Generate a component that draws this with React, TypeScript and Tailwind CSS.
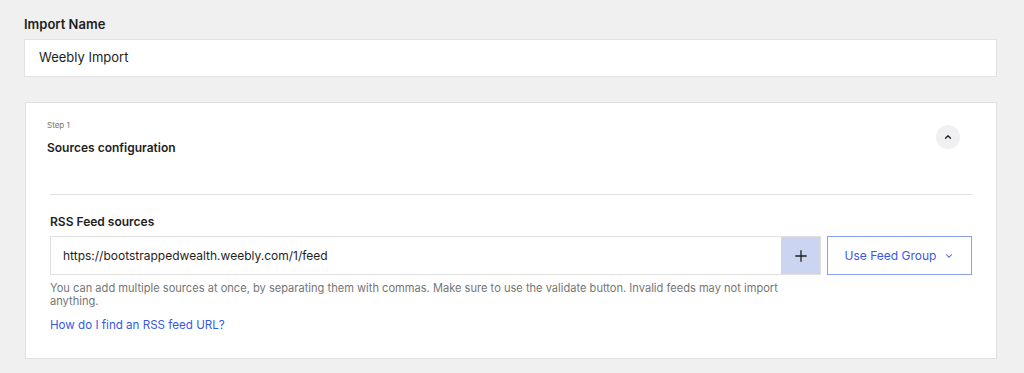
import React from 'react';

// Import form — name field + collapsible "Sources configuration" step

function ChevronUp() {
  return (
    <svg width="10" height="10" viewBox="0 0 24 24" fill="none" stroke="#1e1e1e" strokeWidth="3" strokeLinecap="round" strokeLinejoin="round">
      <path d="M6 15l6-6 6 6" />
    </svg>
  );
}

function ChevronDown() {
  return (
    <svg width="10" height="10" viewBox="0 0 24 24" fill="none" stroke="currentColor" strokeWidth="2.5" strokeLinecap="round" strokeLinejoin="round">
      <path d="M6 9l6 6 6-6" />
    </svg>
  );
}

function Plus() {
  return (
    <svg width="14" height="14" viewBox="0 0 24 24" fill="none" stroke="#1e1e1e" strokeWidth="2.2" strokeLinecap="round">
      <path d="M12 3v18M3 12h18" />
    </svg>
  );
}

export default function App() {
  return (
    <div
      className="min-h-[373px] w-[1024px] bg-[#f0f0f0] pl-[24px] pr-[27px] pt-[16px] text-[#1e1e1e]"
      style={{ fontFamily: 'Inter, "Liberation Sans", sans-serif' }}
    >
      <label className="block text-[13px] font-semibold leading-[16px]">Import Name</label>
      <div className="mt-[7px] flex h-[38px] items-center border border-[#e2e2e2] bg-white px-[14px] text-[13px]">
        Weebly Import
      </div>

      <section className="ml-px mt-[25px] border border-[#e0e0e0] bg-white pb-[26px]">
        <header className="flex items-start justify-between pl-[21px] pr-[36px] pt-[17px]">
          <div>
            <div className="text-[8px] leading-[10px] text-[#757575]">Step 1</div>
            <h2 className="mt-[10px] text-[12px] font-semibold leading-[16px]">Sources configuration</h2>
          </div>
          <button className="mt-[5px] flex h-[24px] w-[24px] items-center justify-center rounded-full bg-[#f0f0f3]">
            <ChevronUp />
          </button>
        </header>

        <div className="mx-[24px] mt-[38px] border-t border-[#e0e0e0]" />

        <div className="px-[24px] pt-[19px]">
          <label className="block text-[12px] font-semibold leading-[16px]">RSS Feed sources</label>
          <div className="mt-[6px] flex gap-[6px]">
            <div className="flex h-[39px] flex-1 border border-[#e0e0e0]">
              <div className="flex flex-1 items-center px-[12px] text-[12px]">
                https://bootstrappedwealth.weebly.com/1/feed
              </div>
              <button className="flex w-[39px] items-center justify-center bg-[#cbd5f1]">
                <Plus />
              </button>
            </div>
            <button className="flex h-[39px] w-[145px] items-center justify-center gap-[8px] border border-[#8a9eec] text-[12px] text-[#3858e9]">
              Use Feed Group
              <ChevronDown />
            </button>
          </div>
          <p className="mt-[7px] max-w-[740px] text-[11.1px] leading-[13px] text-[#757575]">
            You can add multiple sources at once, by separating them with commas. Make sure to use the validate button. Invalid feeds may not import anything.
          </p>
          <a className="mt-[11px] block text-[11.6px] leading-[13px] text-[#3858e9]">How do I find an RSS feed URL?</a>
        </div>
      </section>
    </div>
  );
}
